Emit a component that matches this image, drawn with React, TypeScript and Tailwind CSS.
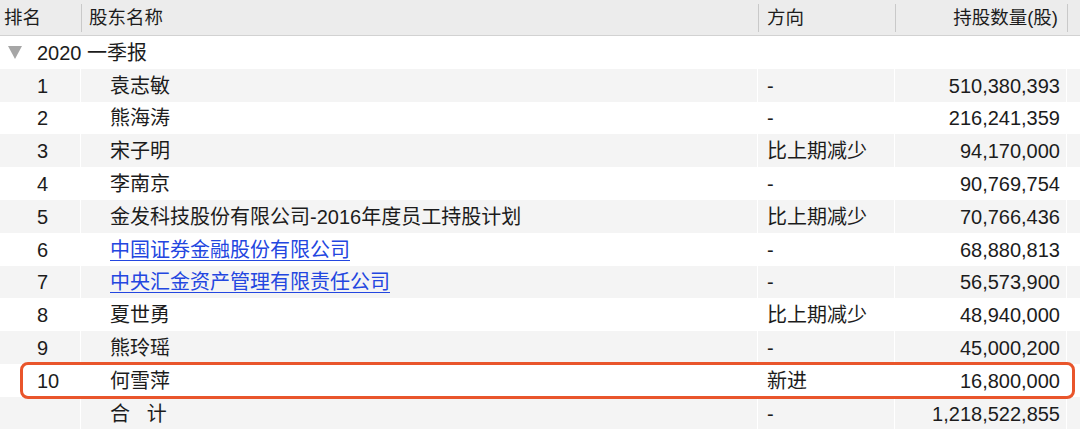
import React from "react";

type Row = {
  rank: string;
  name: string;
  dir: string;
  qty: string;
  link?: boolean;
};

const rows: Row[] = [
  { rank: "1", name: "袁志敏", dir: "-", qty: "510,380,393" },
  { rank: "2", name: "熊海涛", dir: "-", qty: "216,241,359" },
  { rank: "3", name: "宋子明", dir: "比上期减少", qty: "94,170,000" },
  { rank: "4", name: "李南京", dir: "-", qty: "90,769,754" },
  { rank: "5", name: "金发科技股份有限公司-2016年度员工持股计划", dir: "比上期减少", qty: "70,766,436" },
  { rank: "6", name: "中国证券金融股份有限公司", dir: "-", qty: "68,880,813", link: true },
  { rank: "7", name: "中央汇金资产管理有限责任公司", dir: "-", qty: "56,573,900", link: true },
  { rank: "8", name: "夏世勇", dir: "比上期减少", qty: "48,940,000" },
  { rank: "9", name: "熊玲瑶", dir: "-", qty: "45,000,200" },
  { rank: "10", name: "何雪萍", dir: "新进", qty: "16,800,000" },
  { rank: "", name: "合\u00a0\u00a0\u00a0计", dir: "-", qty: "1,218,522,855" },
];

const grid = "grid grid-cols-[80px_676px_136px_171px_1fr] gap-x-[1px]";

const Sep = () => <div className="absolute left-0 top-[4px] h-[28px] w-px bg-[#c9c9c9]" />;

export default function App() {
  return (
    <div
      className="relative w-[1080px] h-[429px] overflow-hidden bg-white text-[20px] text-[#1c1c1c]"
      style={{ fontFamily: '"Liberation Sans", "Noto Sans CJK SC", sans-serif' }}
    >
      {/* header */}
      <div className={`${grid} h-[36px] bg-[#ececec] border-b border-[#d2d2d2] text-[18.5px]`}>
        <div className="flex items-center pl-[4px]">排名</div>
        <div className="relative flex items-center pl-[8px]">
          <Sep />股东名称
        </div>
        <div className="relative flex items-center pl-[9px]">
          <Sep />方向
        </div>
        <div className="relative flex items-center justify-end pr-[8px]">
          <Sep />持股数量(股)
        </div>
        <div className="relative">
          <Sep />
        </div>
      </div>

      {/* group row */}
      <div className="flex h-[32.8px] items-center bg-white pt-[1px]">
        <svg width="14" height="13" viewBox="0 0 14 13" className="ml-[8px] mr-[15px]">
          <path d="M0 0 L14 0 L7 13 Z" fill="#a6a6a6" />
        </svg>
        <span>2020 一季报</span>
      </div>

      {rows.map((r, i) => {
        const bg = i % 2 === 0 ? "bg-[#f4f4f4]" : "bg-white";
        return (
          <div key={i} className={`${grid} h-[32.8px]`}>
            <div className={`${bg} flex items-center pl-[37px] pt-[1px]`}>{r.rank}</div>
            <div className={`${bg} flex items-center pl-[29px] pt-[1px]`}>
              {r.link ? (
                <a className="text-[#2346e0] underline underline-offset-[3px] decoration-1">{r.name}</a>
              ) : (
                r.name
              )}
            </div>
            <div className={`${bg} flex items-center pl-[9px] pt-[1px]`}>{r.dir}</div>
            <div className={`${bg} flex items-center justify-end pr-[6px] pt-[1px]`}>{r.qty}</div>
            <div className={bg} />
          </div>
        );
      })}

      {/* highlight */}
      <div className="absolute left-[20px] top-[362px] h-[37px] w-[1055px] rounded-[8px] border-[3px] border-[#e9552b]" />
    </div>
  );
}
